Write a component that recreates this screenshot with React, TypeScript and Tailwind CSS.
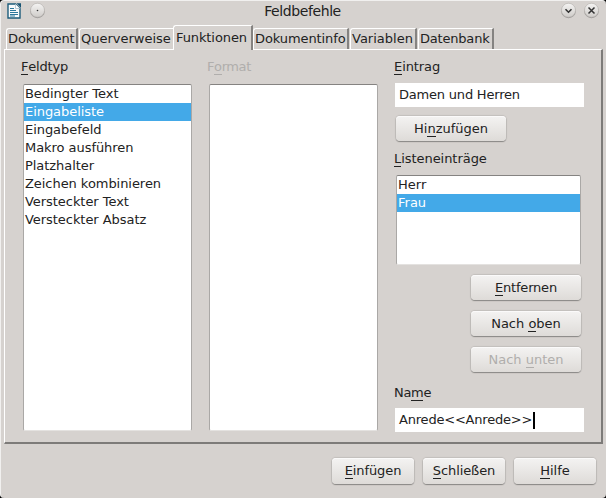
import type { ReactNode } from 'react';

const U = ({ children }: { children: ReactNode }) => (
  <span className="relative inline-block after:absolute after:inset-x-0 after:bottom-px after:h-px after:bg-current">{children}</span>
);

function Button({ children, className = 'h-[25px]', disabled = false }: { children: ReactNode; className?: string; disabled?: boolean }) {
  return (
    <button
      disabled={disabled}
      className={`flex items-center justify-center rounded-[4px] bg-linear-to-b from-[#f4f3f2] to-[#dedbd8] whitespace-pre shadow-[0_1px_1px_#8a8886,0_0_1px_1px_#c2bfbc,inset_0_1px_0_#fbfafa] ${disabled ? 'text-[#b0aeac]' : 'text-[#222]'} ${className}`}
    >
      {children}
    </button>
  );
}

function Tab({ children, className = '', active = false, edge = true }: { children: ReactNode; className?: string; active?: boolean; edge?: boolean }) {
  return (
    <div
      className={`flex shrink-0 justify-start rounded-tl-[3px] border-t border-l border-white ${edge ? 'border-r-2 border-r-[#858381]' : ''} ${active ? 'z-10 -mb-px h-[25px] bg-[#d6d2cf] pt-[3px]' : 'h-[21px] pt-px'} ${className}`}
    >
      {children}
    </div>
  );
}

function List({ items, selected, className = '' }: { items: string[]; selected?: string; className?: string }) {
  return (
    <div className={`rounded-[2px] border border-[#aaa8a6] border-t-[#858381] border-b-[#e4e2e0] bg-white ${className}`}>
      {items.map((item) => (
        <div key={item} className={`h-[18px] pl-px leading-[18px] ${item === selected ? 'bg-[#43a9e8] text-white' : ''}`}>
          {item}
        </div>
      ))}
    </div>
  );
}

function DocumentIcon() {
  return (
    <svg width="15" height="17" viewBox="0 0 15 17">
      <path d="M1 2H8.5L13 6.5V16H1Z" fill="#f7fafb" stroke="#1d5c7b" strokeWidth="1.4" />
      <path d="M8.5 2V6.5H13" fill="#fff" stroke="#a9c2ce" strokeWidth=".8" />
      <path d="M9.5 1.3H14V6Z" fill="#185473" />
      <path d="M3 6.5H7M3 8.5H9M3 10.5H11M3 12.5H11M3 14H8" stroke="#2c789c" strokeWidth="1" />
    </svg>
  );
}

function RoundControl({ kind }: { kind: 'dot' | 'down' | 'close' }) {
  return (
    <svg width="17" height="17" viewBox="0 0 17 17">
      <defs>
        <linearGradient id={`face-${kind}`} x1="0" y1="0" x2="0" y2="1">
          <stop stopColor="#f5f4f3" />
          <stop offset="1" stopColor="#cfccc9" />
        </linearGradient>
      </defs>
      <circle cx="8.5" cy="8.9" r="7.3" fill="#9a9795" />
      <circle cx="8.5" cy="8.2" r="7" fill={`url(#face-${kind})`} stroke="#b5b2af" strokeWidth=".6" />
      {kind === 'dot' && <circle cx="8.5" cy="8.5" r=".8" fill="#333" />}
      {kind === 'down' && <path d="M5.5 7.2L8.5 10.2L11.5 7.2" fill="none" stroke="#333" strokeWidth="1.6" />}
      {kind === 'close' && <path d="M5.5 5.5L11.5 11.5M11.5 5.5L5.5 11.5" stroke="#333" strokeWidth="1.5" />}
    </svg>
  );
}

export default function App() {
  return (
    <div className="h-[498px] w-[606px] overflow-hidden bg-black font-['DejaVu_Sans',sans-serif] text-[13px] leading-[18px] text-[#222]">
      <main className="flex h-full flex-col rounded-[4px] border-t border-l border-[#f1f0ef] bg-[#d6d2cf] pl-[3px] pr-[3px]">
        <header className="flex h-[24px] shrink-0 items-start pt-px">
          <div className="flex w-[180px] gap-[7px] pl-[3px]">
            <DocumentIcon />
            <RoundControl kind="dot" />
          </div>
          <h1 className="w-[237px] text-center text-[14px] tracking-[-0.4px]">Feldbefehle</h1>
          <div className="flex flex-1 justify-end gap-[6px] pr-[3px]">
            <RoundControl kind="down" />
            <RoundControl kind="close" />
          </div>
        </header>
        <nav className="flex h-[24px] shrink-0 items-end pl-[2px]">
          <Tab className="w-[72px] pl-px tracking-[-0.1px]">Dokument</Tab>
          <Tab className="ml-px w-[94px] pl-px" edge={false}>Querverweise</Tab>
          <Tab className="w-[80px] pl-[2px] tracking-[-0.1px]" active>Funktionen</Tab>
          <Tab className="w-[96px] pl-px tracking-[-0.1px]">Dokumentinfo</Tab>
          <Tab className="ml-px w-[67px] pl-px">Variablen</Tab>
          <Tab className="ml-px w-[76px] pl-px tracking-[-0.2px]">Datenbank</Tab>
        </nav>
        <section className="flex h-[395px] w-[599px] shrink-0 border-t border-r-2 border-b-2 border-l border-t-white border-r-[#7d7b79] border-b-[#7d7b79] border-l-white pt-[8px]">
          <div className="ml-[16px] w-[188px]">
            <div className="tracking-[-0.2px]"><U>F</U>eldtyp</div>
            <List
              className="mt-[8px] ml-[2px] h-[347px] w-[169px] tracking-[-0.05px]"
              selected="Eingabeliste"
              items={['Bedingter Text', 'Eingabeliste', 'Eingabefeld', 'Makro ausführen', 'Platzhalter', 'Zeichen kombinieren', 'Versteckter Text', 'Versteckter Absatz']}
            />
          </div>
          <div className="w-[184px]">
            <div className="-ml-[2px] tracking-[-0.4px] text-[#b0aeac]">F<U>o</U>rmat</div>
            <List className="mt-[8px] h-[347px] w-[169px]" items={[]} />
          </div>
          <div className="flex w-[192px] flex-col pl-px">
            <div className="tracking-[-0.1px]"><U>E</U>intrag</div>
            <div className="mt-[7px] ml-px h-[24px] w-[189px] bg-white pl-[4px] leading-[24px] tracking-[-0.2px]">Damen und Herren</div>
            <Button className="mt-[9px] ml-[2px] h-[25px] w-[110px]">Hi<U>n</U>zufügen</Button>
            <div className="mt-[9px] tracking-[-0.05px]"><U>L</U>isteneinträge</div>
            <List className="mt-[7px] ml-[2px] h-[90px] w-[185px]" items={['Herr', 'Frau']} selected="Frau" />
            <div className="mt-[10px] ml-[77px] flex w-[110px] flex-col gap-[11px]">
              <Button className="h-[25px] tracking-[-0.2px]"><U>E</U>ntfernen</Button>
              <Button>Nach <U>o</U>ben</Button>
              <Button disabled>Nach <U>u</U>nten</Button>
            </div>
            <div className="mt-[12px] tracking-[-0.3px]">Na<U>m</U>e</div>
            <div className="mt-[6px] ml-px flex h-[24px] w-[189px] items-center bg-white pl-[4px] tracking-[-0.2px]">
              {'Anrede<<Anrede>>'}<span className="ml-px h-[17px] w-[2px] bg-black" />
            </div>
          </div>
        </section>
        <footer className="flex gap-[9px] pt-[14px] pl-[328px]">
          <Button className="h-[26px] w-[82px] tracking-[-0.1px]"><U>E</U>infügen</Button>
          <Button className="h-[26px] w-[82px] tracking-[-0.1px]"><U>S</U>chließen</Button>
          <Button className="h-[26px] w-[82px]"><U>H</U>ilfe</Button>
        </footer>
      </main>
    </div>
  );
}
